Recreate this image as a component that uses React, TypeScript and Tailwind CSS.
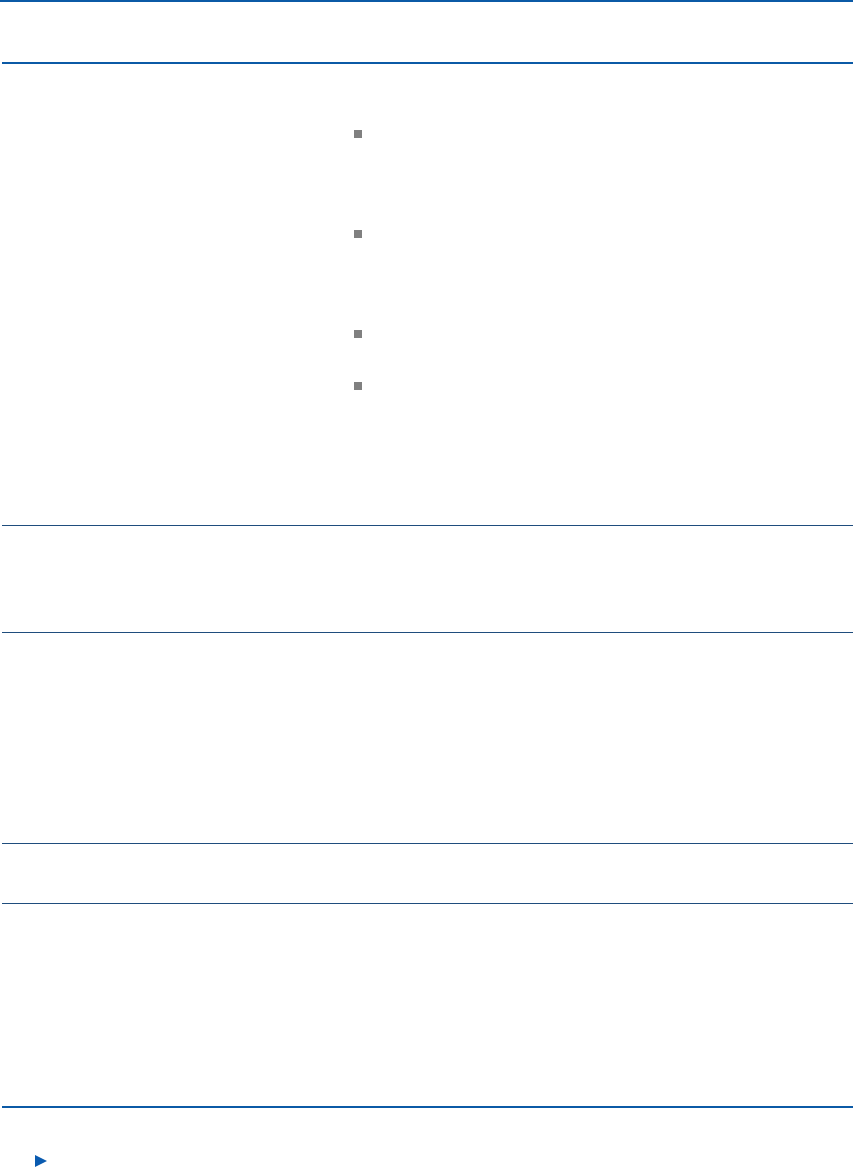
export default function App() {
  const bullets = [100, 100, 52, 20]

  return (
    <div className="w-[853px] min-h-[1169px] bg-white font-['Liberation_Sans',sans-serif]">
      <div className="h-[2px] w-full bg-[#0b5aa6]" />
      <div className="ml-[2px]">
        {/* header */}
        <div className="h-[62px] border-b-2 border-[#0b5aa6]" />

        {/* row 1 */}
        <div className="flex h-[462px] border-b border-[#1f4d7d]">
          <div className="w-[352px]" />
          <ul className="flex flex-col pt-[66px]">
            {bullets.map((h, i) => (
              <li key={i} className="flex items-start" style={{ height: h }}>
                <span className="block h-[8px] w-[8px] bg-[#808080]" />
              </li>
            ))}
          </ul>
        </div>

        {/* row 2 */}
        <div className="h-[107px] border-b border-[#1f4d7d]" />
        {/* row 3 */}
        <div className="h-[211px] border-b border-[#1f4d7d]" />
        {/* row 4 */}
        <div className="h-[60px] border-b border-[#1f4d7d]" />
        {/* row 5 */}
        <div className="h-[204px] border-b-2 border-[#0b5aa6]" />

        <div className="flex pl-[33px] pt-[47px]">
          <svg width="12" height="12" viewBox="0 0 12 12">
            <polygon points="0,0 12,6 0,12" fill="#0a5bb0" />
          </svg>
        </div>
      </div>
    </div>
  )
}
